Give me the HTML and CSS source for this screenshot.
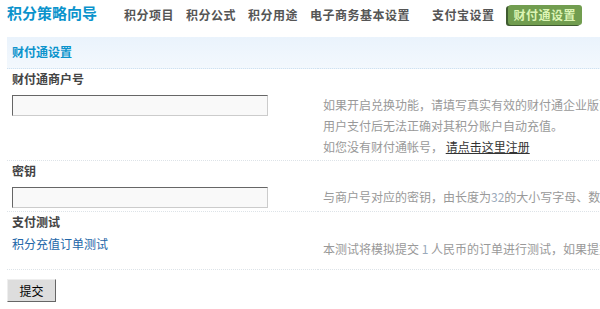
FILE: index.html
```html
<!DOCTYPE html>
<html lang="zh-CN">
<head>
<meta charset="utf-8">
<title>积分策略向导 - 财付通设置</title>
<link rel="stylesheet" href="styles.css">
</head>
<body>
<div class="page">
  <div class="header">
    <h1 class="title">积分策略向导</h1>
    <nav class="nav">
      <a class="nav-item first" href="#">积分项目</a>
      <a class="nav-item" href="#">积分公式</a>
      <a class="nav-item" href="#">积分用途</a>
      <a class="nav-item" href="#">电子商务基本设置</a>
      <a class="nav-item wide" href="#">支付宝设置</a>
      <a class="nav-item active" href="#">财付通设置</a>
    </nav>
  </div>

  <form class="form">
    <table class="tb">
      <tr class="section"><th colspan="2">财付通设置</th></tr>
      <tr class="label-row"><td colspan="2">财付通商户号</td></tr>
      <tr class="field-row">
        <td class="rowform"><input class="txt" type="text"></td>
        <td class="tips">如果开启兑换功能，请填写真实有效的财付通企业版商户号，否则将造成<br>用户支付后无法正确对其积分账户自动充值。<br>如您没有财付通帐号， <a class="reg" href="#">请点击这里注册</a></td>
      </tr>
      <tr class="label-row"><td colspan="2">密钥</td></tr>
      <tr class="field-row">
        <td class="rowform"><input class="txt" type="text"></td>
        <td class="tips">与商户号对应的密钥，由长度为<span class="num">32</span>的大小写字母、数字组成，请妥善保管</td>
      </tr>
      <tr class="label-row"><td colspan="2">支付测试</td></tr>
      <tr class="field-row test-row">
        <td class="rowform"><a class="test-link" href="#">积分充值订单测试</a></td>
        <td class="tips tips-low">本测试将模拟提交 <span class="num">1</span> 人民币的订单进行测试，如果提交后成功跳转到财付通支付页面，说明配置正确</td>
      </tr>
    </table>
    <button class="btn" type="button">提交</button>
  </form>
</div>
</body>
</html>
```

FILE: styles.css
```css
html, body {
  margin: 0;
  padding: 0;
  overflow: hidden;
  background: #fff;
}

body {
  font-family: "Noto Sans CJK SC", "Liberation Sans", sans-serif;
  font-size: 12px;
  color: #333;
}

.page {
  padding-left: 7px;
  width: 900px;
}

.header {
  display: flex;
  align-items: center;
  height: 30px;
  margin-bottom: 7px;
}

.title {
  margin: 0 0 4px 0;
  font-size: 15px;
  line-height: 18px;
  font-weight: bold;
  color: #0b93cc;
}

.nav {
  display: flex;
  align-items: center;
}

.nav-item {
  margin-left: 12px;
  font-weight: bold;
  font-size: 12px;
  letter-spacing: 0.5px;
  color: #555;
  text-decoration: none;
  line-height: 20px;
}

.nav-item.first {
  margin-left: 27px;
}

.nav-item.wide {
  margin-left: 22px;
}

.nav-item.active {
  margin-left: 13px;
  padding: 0 6px;
  height: 20px;
  background: #719d4f;
  color: #dcf4b4;
  border-radius: 3px;
  box-shadow: -2px 1px 0 #3f5b30;
}

.form {
  margin: 0;
}

.tb {
  border-collapse: collapse;
  width: 900px;
}

.tb td, .tb th {
  padding: 0 5px;
  text-align: left;
  vertical-align: top;
}

.section th {
  height: 31px;
  line-height: 30px;
  font-weight: bold;
  color: #0b93cc;
  background: linear-gradient(#eaf3fc, #f3f8fd);
  border-bottom: 1px dotted #cfe1ef;
}

.label-row td {
  line-height: 19px;
  font-weight: bold;
  color: #444;
}

.field-row td {
  padding-top: 6px;
  padding-bottom: 3px;
  border-bottom: 1px dotted #dde3e8;
}

.rowform {
  width: 301px;
}

.txt {
  display: block;
  box-sizing: border-box;
  width: 256px;
  height: 21px;
  margin: 1px 0 0 0;
  padding: 0 3px;
  background: #f9f9f9;
  border: 1px solid;
  border-color: #666 #ccc #ccc #666;
  font: inherit;
}

.tips {
  color: #999;
  line-height: 21px;
  white-space: nowrap;
}

.num {
  color: #9aaabb;
}

.reg {
  color: #333;
  text-decoration: underline;
}

.test-row td {
  height: 29px;
  padding-top: 2px;
  padding-bottom: 7px;
}

.test-row .tips-low {
  padding-top: 7px;
  padding-bottom: 2px;
}

.test-link {
  color: #2366a8;
  text-decoration: none;
  line-height: 21px;
}

.btn {
  display: block;
  margin-top: 9px;
  width: 49px;
  height: 23px;
  padding: 0;
  background: #ddd;
  border: 1px solid;
  border-color: #eee #666 #666 #eee;
  font-family: "Noto Sans CJK SC", sans-serif;
  font-size: 12px;
  color: #000;
}
```
